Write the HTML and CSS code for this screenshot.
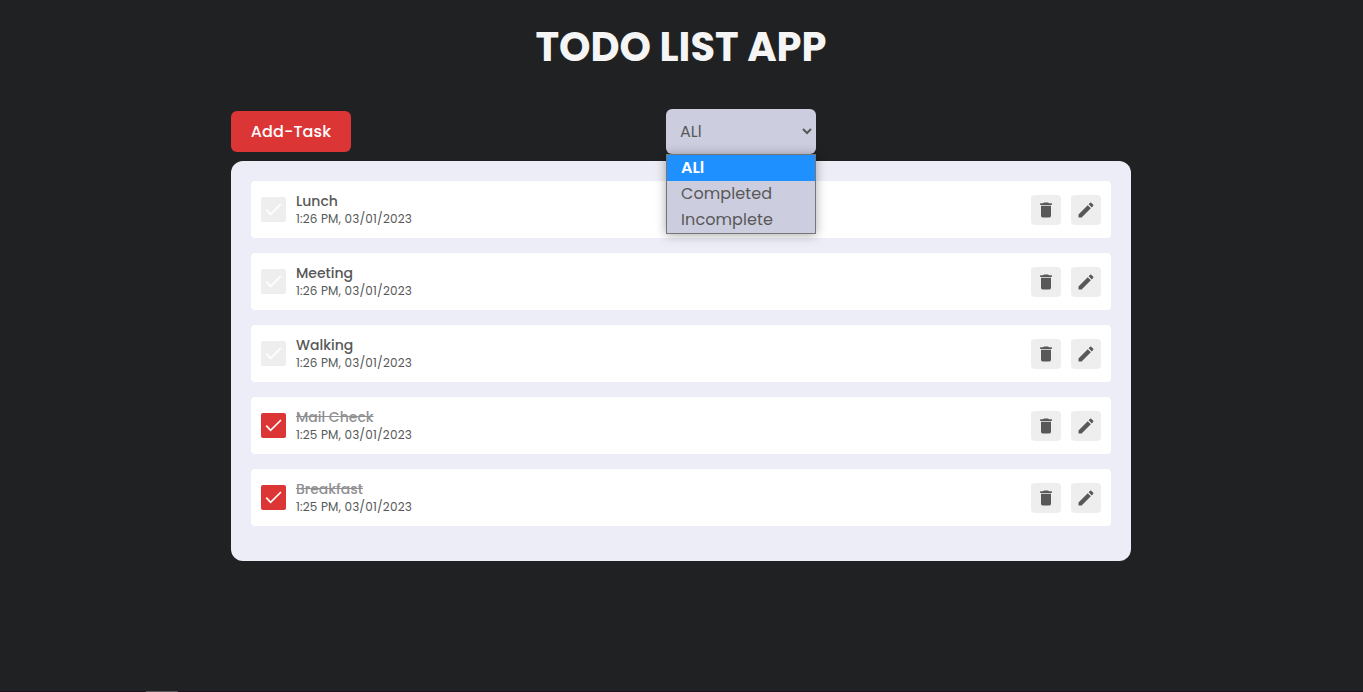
FILE: index.html
```html
<!DOCTYPE html>
<html lang="en">

<head>
    <meta charset="UTF-8">
    <meta name="viewport" content="width=device-width, initial-scale=1.0">
    <title>Todo List App</title>
    <link rel="stylesheet" href="styles.css">
</head>

<body>
    <!-- Shared icons -->
    <svg class="icon-defs" width="0" height="0">
        <symbol id="icon-check" viewBox="0 0 25 25">
            <path d="M5.2 12.6 L9.6 17.4 L20 7" fill="none" stroke="currentColor" stroke-width="1.6" />
        </symbol>
        <symbol id="icon-delete" viewBox="0 0 24 24">
            <path d="M6 19c0 1.1.9 2 2 2h8c1.1 0 2-.9 2-2V7H6v12zM19 4h-3.5l-1-1h-5l-1 1H5v2h14V4z" />
        </symbol>
        <symbol id="icon-edit" viewBox="0 0 24 24">
            <path d="M3 17.25V21h3.75L17.81 9.94l-3.75-3.75L3 17.25zM20.71 7.04a.996.996 0 0 0 0-1.41l-2.34-2.34a.996.996 0 0 0-1.41 0l-1.83 1.83 3.75 3.75 1.83-1.83z" />
        </symbol>
    </svg>

    <div class="container">
        <h1 class="title">TODO LIST APP</h1>

        <div class="toolbar">
            <button class="add-btn">Add-Task</button>
            <div class="filter">
                <div class="filter-box">
                    <span>ALl</span>
                    <svg class="arrow" width="10" height="7" viewBox="0 0 10 7">
                        <path d="M1 1 L5 5 L9 1" fill="none" stroke="currentColor" stroke-width="2" />
                    </svg>
                </div>
                <ul class="filter-menu">
                    <li class="selected">ALl</li>
                    <li>Completed</li>
                    <li>Incomplete</li>
                </ul>
            </div>
        </div>

        <div class="task-list">
            <div class="task">
                <svg class="checkbox"><use href="#icon-check" /></svg>
                <div class="task-text">
                    <p class="task-name">Lunch</p>
                    <p class="task-time">1:26 PM, 03/01/2023</p>
                </div>
                <button class="icon-btn" aria-label="Delete"><svg><use href="#icon-delete" /></svg></button>
                <button class="icon-btn" aria-label="Edit"><svg><use href="#icon-edit" /></svg></button>
            </div>

            <div class="task">
                <svg class="checkbox"><use href="#icon-check" /></svg>
                <div class="task-text">
                    <p class="task-name">Meeting</p>
                    <p class="task-time">1:26 PM, 03/01/2023</p>
                </div>
                <button class="icon-btn" aria-label="Delete"><svg><use href="#icon-delete" /></svg></button>
                <button class="icon-btn" aria-label="Edit"><svg><use href="#icon-edit" /></svg></button>
            </div>

            <div class="task">
                <svg class="checkbox"><use href="#icon-check" /></svg>
                <div class="task-text">
                    <p class="task-name">Walking</p>
                    <p class="task-time">1:26 PM, 03/01/2023</p>
                </div>
                <button class="icon-btn" aria-label="Delete"><svg><use href="#icon-delete" /></svg></button>
                <button class="icon-btn" aria-label="Edit"><svg><use href="#icon-edit" /></svg></button>
            </div>

            <div class="task done">
                <svg class="checkbox"><use href="#icon-check" /></svg>
                <div class="task-text">
                    <p class="task-name">Mail Check</p>
                    <p class="task-time">1:25 PM, 03/01/2023</p>
                </div>
                <button class="icon-btn" aria-label="Delete"><svg><use href="#icon-delete" /></svg></button>
                <button class="icon-btn" aria-label="Edit"><svg><use href="#icon-edit" /></svg></button>
            </div>

            <div class="task done">
                <svg class="checkbox"><use href="#icon-check" /></svg>
                <div class="task-text">
                    <p class="task-name">Breakfast</p>
                    <p class="task-time">1:25 PM, 03/01/2023</p>
                </div>
                <button class="icon-btn" aria-label="Delete"><svg><use href="#icon-delete" /></svg></button>
                <button class="icon-btn" aria-label="Edit"><svg><use href="#icon-edit" /></svg></button>
            </div>
        </div>
    </div>

    <div class="bottom-line"><span></span></div>
</body>

</html>
```

FILE: styles.css
```css
* {
    margin: 0;
    padding: 0;
    box-sizing: border-box;
}

body {
    display: flex;
    flex-direction: column;
    height: 100vh;
    overflow: hidden;
    background-color: #202122;
    color: #585858;
    font-family: Poppins, Inter, sans-serif;
}

.icon-defs {
    position: absolute;
}

.container {
    width: 900px;
    margin-left: 231px;
    flex: 1;
}

.title {
    height: 109px;
    padding-top: 17px;
    line-height: 60px;
    font-size: 40px;
    font-weight: 700;
    text-align: center;
    color: #f5f5f5;
}

.toolbar {
    display: flex;
    align-items: center;
    height: 45px;
    margin-bottom: 7px;
}

.add-btn {
    width: 120px;
    height: 41px;
    border: none;
    border-radius: 6px;
    background-color: #dc3535;
    color: white;
    font: inherit;
    font-size: 16px;
    font-weight: 500;
    letter-spacing: 0.1px;
    cursor: pointer;
}

.filter {
    position: relative;
    width: 150px;
    margin-left: 315px;
    font-size: 16px;
}

.filter-box {
    display: flex;
    align-items: center;
    justify-content: space-between;
    height: 45px;
    padding: 0 4px 0 14px;
    border-radius: 6px;
    background-color: #cccddf;
}

.filter-menu {
    position: absolute;
    top: 45px;
    left: 0;
    width: 150px;
    border: 1px solid #767676;
    background-color: #cccddf;
    box-shadow: 0 1px 10px rgba(0, 0, 0, 0.35);
    letter-spacing: 0.1px;
    list-style: none;
}

.filter-menu li {
    height: 26px;
    padding-left: 14px;
    line-height: 26px;
}

.filter-menu .selected {
    background-color: #1e90ff;
    color: white;
    font-weight: 600;
    letter-spacing: 0;
}

.task-list {
    display: flex;
    flex-direction: column;
    gap: 15px;
    height: 400px;
    padding: 20px;
    border-radius: 12px;
    background-color: #ecedf6;
}

.task {
    display: flex;
    align-items: center;
    gap: 10px;
    height: 57px;
    padding: 0 10px;
    border-radius: 4px;
    background-color: white;
}

.checkbox {
    width: 25px;
    height: 25px;
    border-radius: 2px;
    background-color: #eee;
    color: white;
}

.task-text {
    flex: 1;
}

.task-name {
    line-height: 19px;
    font-size: 14px;
    font-weight: 500;
}

.task-time {
    line-height: 16px;
    font-size: 12px;
    letter-spacing: 0.17px;
}

.done .checkbox {
    background-color: #dc3535;
}

.done .task-name {
    color: #8f8f92;
    text-decoration: line-through;
}

.icon-btn {
    display: flex;
    align-items: center;
    justify-content: center;
    width: 30px;
    height: 30px;
    border: none;
    border-radius: 4px;
    background-color: #eee;
    cursor: pointer;
}

.icon-btn svg {
    width: 20px;
    height: 20px;
    fill: #585858;
}

.bottom-line {
    height: 1px;
    padding-left: 146px;
    background-color: #1c1118;
}

.bottom-line span {
    display: block;
    width: 32px;
    height: 1px;
    background-color: #5c565b;
}
```
